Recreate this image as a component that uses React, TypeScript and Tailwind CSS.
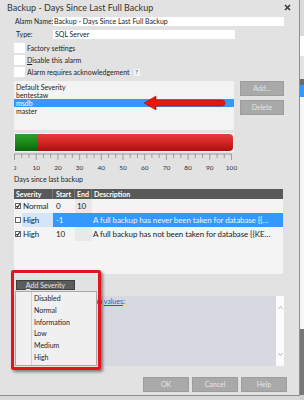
const listItems = ["Default Severity", "bentestaw", "msdb", "master"];
const menuItems = ["Disabled", "Normal", "Information", "Low", "Medium", "High"];

const rows = [
  { checked: true, severity: "Normal", start: "0", end: "10", desc: "", selected: false },
  { checked: false, severity: "High", start: "-1", end: "", desc: "A full backup has never been taken for database {{…", selected: true },
  { checked: true, severity: "High", start: "10", end: "", desc: "A full backup has not been taken for database {{KE…", selected: false },
];

function RowCheck({ checked }: { checked: boolean }) {
  return (
    <svg width="6" height="6" viewBox="0 0 6 6" className="shrink-0">
      <rect x="0.5" y="0.5" width="5" height="5" fill="#fff" stroke="#666" />
      {checked && <path d="M1.3 3 L2.5 4.3 L4.7 1.4" fill="none" stroke="#222" strokeWidth="1.1" />}
    </svg>
  );
}

function Ticks() {
  const x = (v: number) => 0.5 + v * 2.17;
  const ticks = [];
  for (let i = 0; i <= 30; i++) {
    const v = (i * 10) / 3;
    const major = i % 3 === 0;
    ticks.push(<line key={i} x1={x(v)} x2={x(v)} y1={2} y2={major ? 8 : 6} stroke="#8a8a8a" strokeWidth="0.8" />);
  }
  return (
    <svg width="224" height="22" className="ml-[14px] block">
      <line x1={0.5} x2={x(100)} y1={2} y2={2} stroke="#8a8a8a" strokeWidth="0.8" />
      {ticks}
      {[0, 10, 20, 30, 40, 50, 60, 70, 80, 90, 100].map((v) => (
        <text key={v} x={x(v)} y={17.5} textAnchor="middle" fontSize="6.5" fill="#333" fontFamily="Lato, sans-serif">
          {v}
        </text>
      ))}
    </svg>
  );
}

export default function App() {
  return (
    <div className="flex w-[304px] h-[400px] overflow-hidden bg-[#d9d9d9] font-['Lato',sans-serif] text-[#222]">
      <div className="relative flex flex-col w-[300px] h-[396px] shrink-0 bg-[#e2e2e2] border-r border-b border-[#8f8f8f]">
        {/* title */}
        <div className="flex h-[14px] items-center justify-between pl-[7px] pr-[8px]">
          <span className="text-[9px] leading-none text-[#333] whitespace-nowrap">Backup - Days Since Last Full Backup</span>
          <svg width="7" height="7" viewBox="0 0 7 7">
            <path d="M1 1 L6 6 M6 1 L1 6" stroke="#3a3a3a" strokeWidth="1.6" />
          </svg>
        </div>

        {/* name + type */}
        <div className="mt-[3px] flex h-[9px] items-center text-[7px] leading-none">
          <span className="w-[53px] pl-[15px] text-[6.7px] whitespace-nowrap">Alarm Name:</span>
          <div className="flex h-[9px] w-[231px] items-center bg-white pl-[1px] whitespace-nowrap">Backup - Days Since Last Full Backup</div>
        </div>
        <div className="mt-[4px] flex h-[9px] items-center text-[7px] leading-none">
          <span className="w-[53px] pl-[16px]">Type:</span>
          <div className="flex h-[9px] w-[182px] items-center bg-white pl-[2px]">SQL Server</div>
        </div>

        {/* checkboxes */}
        <div className="mt-[4px] flex flex-col gap-[2px] text-[7px] leading-none">
          <div className="flex h-[10px] items-center pl-[14px]">
            <div className="h-[10px] w-[11px] bg-white" />
            <span className="ml-[2px]">Factory settings</span>
          </div>
          <div className="flex h-[10px] items-center pl-[14px]">
            <div className="h-[10px] w-[11px] bg-white" />
            <span className="ml-[2px]"><span className="underline">D</span>isable this alarm</span>
          </div>
          <div className="flex h-[10px] items-center pl-[14px]">
            <div className="h-[10px] w-[11px] bg-white" />
            <span className="ml-[2px]">Alarm requires acknowledgement</span>
            <span className="ml-[4px] flex h-[7px] w-[6px] items-center justify-center bg-[#f4f4f4] text-[6px] font-bold text-[#1f6fd0]">?</span>
          </div>
        </div>

        {/* list + buttons */}
        <div className="mt-[4px] flex pl-[14px]">
          <div className="h-[49px] w-[220px] bg-[#f3f3f3] pt-[2px] text-[7px]">
            {listItems.map((item) => (
              <div key={item} className={`h-[8px] pl-[2px] leading-[8px] ${item === "msdb" ? "bg-[#3399ff] text-white" : "text-[#222]"}`}>
                {item}
              </div>
            ))}
          </div>
          <div className="ml-[6px] flex flex-col gap-[4px]">
            <div className="flex h-[15px] w-[44px] items-center justify-center border border-[#9c9c9c] bg-[#a9a9a9] text-[7px] text-[#e4e4e4]">Add...</div>
            <div className="flex h-[15px] w-[44px] items-center justify-center border border-[#9c9c9c] bg-[#a9a9a9] text-[7px] text-[#e4e4e4]">Delete</div>
          </div>
        </div>

        {/* bar */}
        <div className="mt-[3px] ml-[14px] flex h-[19px] w-[220px] border border-[#f4f4f4]">
          <div className="w-[22px] bg-gradient-to-b from-[#2f9e2f] via-[#198a19] to-[#0b640b]" />
          <div className="flex-1 rounded-r-[4px] bg-gradient-to-b from-[#ea3b3b] via-[#d42323] to-[#aa0f0f]" />
        </div>
        <Ticks />
        <div className="mt-[1px] h-[8px] pl-[14px] text-[7px] leading-[8px]">Days since last backup</div>

        {/* table */}
        <div className="mt-[6px] ml-[14px] w-[269px]">
          <div className="flex h-[10px] items-center bg-[#595959] text-[7px] font-bold leading-none text-white">
            <div className="flex h-full w-[39px] items-center border-r border-[#7a7a7a] pl-[2px]">Severity</div>
            <div className="flex h-full w-[22px] items-center border-r border-[#7a7a7a] pl-[3px]">Start</div>
            <div className="flex h-full w-[17px] items-center border-r border-[#7a7a7a] pl-[2px]">End</div>
            <div className="flex h-full flex-1 items-center pl-[2px]">Description</div>
          </div>
          <div className="h-[75px] bg-[#f4f4f4] text-[8px] leading-none tracking-[-0.1px]">
            {rows.map((r, i) => (
              <div key={i} className="flex h-[14px]">
                <div className="flex w-[39px] items-center">
                  <div className="flex w-[8px] justify-center">
                    <RowCheck checked={r.checked} />
                  </div>
                  <div className={`flex h-full flex-1 items-center pl-[1px] ${r.selected ? "bg-[#d3e5f7]" : ""}`}>{r.severity}</div>
                </div>
                <div className={`flex flex-1 ${r.selected ? "bg-[#3399ff] text-[#eef5ff]" : ""}`}>
                  <div className="flex w-[22px] items-center pl-[3px]">{r.start}</div>
                  <div className={`flex w-[17px] items-center pl-[2px] ${r.selected ? "" : "bg-[#e9e9e9]"}`}>{r.end}</div>
                  <div className="flex flex-1 items-center pl-[1px] whitespace-nowrap overflow-hidden">{r.desc}</div>
                </div>
              </div>
            ))}
          </div>
        </div>

        {/* substitution panel */}
        <div className="mt-[22px] ml-[14px] flex h-[70px] w-[270px]">
          <div className="flex-1 bg-[#d8d8e0] pl-[13px] pt-[1px] text-[7px] leading-[8px] text-[#222] whitespace-nowrap">
            You can use substitution <span className="text-[#1d5fc9] underline">values</span>:
          </div>
          <div className="flex w-[8px] flex-col items-center justify-between bg-[#fbfbfb] py-[10px]">
            <svg width="5" height="3" viewBox="0 0 5 3"><path d="M0.5 2.7 L2.5 0.5 L4.5 2.7" fill="none" stroke="#8a8a8a" strokeWidth="0.7" /></svg>
            <svg width="5" height="3" viewBox="0 0 5 3"><path d="M0.5 0.3 L2.5 2.5 L4.5 0.3" fill="none" stroke="#8a8a8a" strokeWidth="0.7" /></svg>
          </div>
        </div>

        {/* bottom buttons */}
        <div className="mt-[11px] flex justify-end gap-[3px] pr-[12px]">
          {["OK", "Cancel", "Help"].map((b) => (
            <div key={b} className="flex h-[15px] w-[46px] items-center justify-center border border-[#9c9c9c] bg-[#a9a9a9] text-[7px] text-[#e6e6e6]">
              {b}
            </div>
          ))}
        </div>

        {/* red arrow annotation */}
        <svg width="88" height="18" viewBox="0 0 88 18" className="absolute left-[140px] top-[94px]">
          <path d="M4 9 L16 2 L16 6 L82 6 A3 3 0 0 1 82 12 L16 12 L16 16 Z" fill="#e01818" stroke="#b00c0c" strokeWidth="0.6" />
        </svg>

        {/* red highlight box with menu */}
        <div className="absolute left-[11px] top-[270px] flex h-[100px] w-[90px] flex-col rounded-[2px] border-[3px] border-[#e3141c] shadow-[2px_2px_3px_rgba(0,0,0,0.45)]">
          <div className="mt-[7px] ml-[2px] flex h-[10px] w-[59px] items-center justify-center border border-[#3e3e3e] bg-[#5c5c5c] text-[7px] leading-none text-[#e4e4e4]">
            <span><span className="underline">A</span>dd Severity</span>
          </div>
          <div className="mt-[1px] ml-[1px] flex h-[75px] w-[82px] border border-[#a8a8a8] bg-[#f0f0f0]">
            <div className="w-[16px] border-r border-[#d2d2d2]" />
            <div className="flex flex-col pt-[1px] pl-[2px] text-[7px] text-[#1e1e1e]">
              {menuItems.map((m) => (
                <div key={m} className="h-[11.8px] leading-[11.8px]">{m}</div>
              ))}
            </div>
          </div>
        </div>
      </div>

      {/* window peeking on the right */}
      <div className="flex flex-1 flex-col">
        <div className="h-[36px] bg-[#dadada]" />
        <div className="h-[20px] bg-white" />
        <div className="h-[23px] bg-[#e4e4e4]" />
        <div className="h-[6px] bg-[#6b6b6b]" />
        <div className="h-[12px] bg-[#3399ff]" />
        <div className="flex-1 bg-[#f6f6f6]" />
        <div className="h-[66px] bg-[#777]" />
        <div className="h-[5px] bg-[#cfcfcf]" />
      </div>
    </div>
  );
}
